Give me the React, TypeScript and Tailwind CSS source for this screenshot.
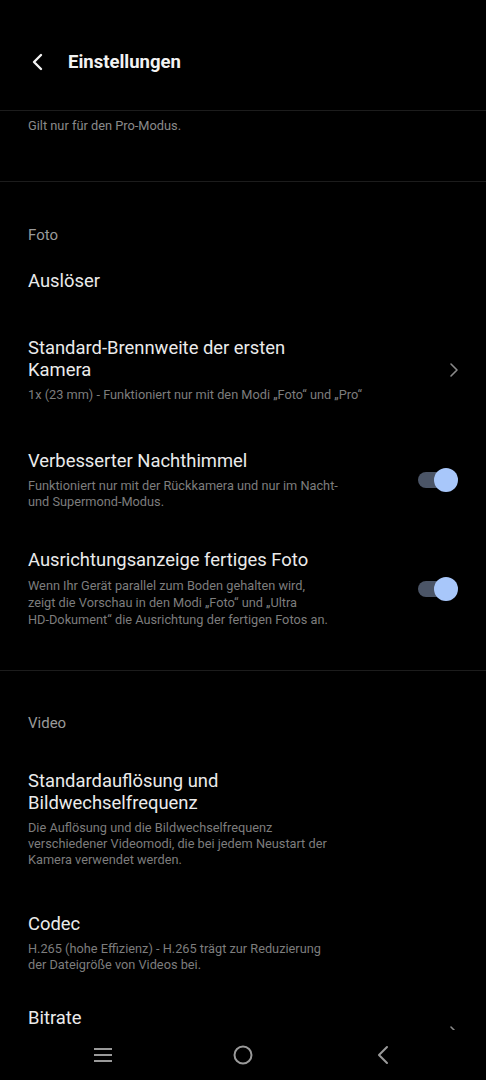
import React from 'react';

const font = { fontFamily: 'Roboto, "Noto Sans", sans-serif' };

function Toggle() {
  return (
    <div className="relative h-[24px] w-[40px] shrink-0">
      <div className="absolute left-0 top-[4px] h-[16px] w-[30px] rounded-full bg-[#4b5567]" />
      <div className="absolute right-0 top-0 h-[24px] w-[24px] rounded-full bg-[#a8c7fa]" />
    </div>
  );
}

function Chevron({ className = '' }: { className?: string }) {
  return (
    <svg width="10" height="16" viewBox="0 0 10 16" className={className}>
      <path d="M2 2l6 6-6 6" fill="none" stroke="#8a8a8a" strokeWidth="1.6" strokeLinecap="round" strokeLinejoin="round" />
    </svg>
  );
}

type Row = {
  title: string[];
  sub?: string[];
  mt: number;
  right?: 'toggle' | 'chevron';
  subLh?: string;
  chevronClass?: string;
};

function SettingRow({ row }: { row: Row }) {
  return (
    <div className="flex items-center pl-[28px] pr-[28px]" style={{ marginTop: row.mt }}>
      <div className="flex-1 min-w-0 pr-[60px]">
        <div className="text-[18.4px] leading-[22px] text-[#ebebeb]">
          {row.title.map((t) => (
            <div key={t} className="whitespace-nowrap">{t}</div>
          ))}
        </div>
        {row.sub && (
          <div className={`mt-[6px] text-[12.75px] ${row.subLh ?? 'leading-[16px]'} text-[#7d7d7d]`}>
            {row.sub.map((t) => (
              <div key={t} className="whitespace-nowrap">{t}</div>
            ))}
          </div>
        )}
      </div>
      {row.right === 'toggle' && <Toggle />}
      {row.right === 'chevron' && <Chevron className={row.chevronClass ?? 'mr-[-1px]'} />}
    </div>
  );
}

export default function App() {
  return (
    <div className="relative h-[1080px] w-[486px] overflow-hidden bg-black" style={font}>
      {/* header */}
      <div className="flex h-[110px] items-start pt-[51px]">
        <svg width="14" height="20" viewBox="0 0 14 20" className="ml-[31px] mt-[1px]">
          <path d="M10 3L3 10l7 7" fill="none" stroke="#f2f2f2" strokeWidth="2.4" strokeLinecap="round" strokeLinejoin="round" />
        </svg>
        <h1 className="ml-[23px] text-[18.5px] font-bold leading-[22px] text-[#f2f2f2]">Einstellungen</h1>
      </div>

      <div className="h-[71px] border-t border-[#1c1c1c] pl-[28px] pt-[6px] text-[12.8px] leading-[18px] text-[#8a8a8a]">
        Gilt nur für den Pro-Modus.
      </div>

      {/* Foto */}
      <div className="h-[489px] border-t border-[#1c1c1c]">
        <div className="mt-[43px] pl-[28px] text-[15px] leading-[20px] text-[#9a9a9a]">Foto</div>
        <div className="mt-[24px] pl-[28px] text-[18.4px] leading-[24px] text-[#ebebeb]">Auslöser</div>
        <SettingRow
          row={{
            title: ['Standard-Brennweite der ersten', 'Kamera'],
            sub: ['1x (23 mm) - Funktioniert nur mit den Modi „Foto“ und „Pro“'],
            mt: 44,
            right: 'chevron',
          }}
        />
        <SettingRow
          row={{
            title: ['Verbesserter Nachthimmel'],
            sub: ['Funktioniert nur mit der Rückkamera und nur im Nacht-', 'und Supermond-Modus.'],
            mt: 47,
            right: 'toggle',
          }}
        />
        <SettingRow
          row={{
            title: ['Ausrichtungsanzeige fertiges Foto'],
            sub: [
              'Wenn Ihr Gerät parallel zum Boden gehalten wird,',
              'zeigt die Vorschau in den Modi „Foto“ und „Ultra',
              'HD-Dokument“ die Ausrichtung der fertigen Fotos an.',
            ],
            subLh: 'leading-[17px]',
            mt: 39,
            right: 'toggle',
          }}
        />
      </div>

      {/* Video */}
      <div className="border-t border-[#1c1c1c]">
        <div className="mt-[42px] pl-[28px] text-[15px] leading-[20px] text-[#9a9a9a]">Video</div>
        <SettingRow
          row={{
            title: ['Standardauflösung und', 'Bildwechselfrequenz'],
            sub: [
              'Die Auflösung und die Bildwechselfrequenz',
              'verschiedener Videomodi, die bei jedem Neustart der',
              'Kamera verwendet werden.',
            ],
            mt: 37,
          }}
        />
        <SettingRow
          row={{
            title: ['Codec'],
            sub: ['H.265 (hohe Effizienz) - H.265 trägt zur Reduzierung', 'der Dateigröße von Videos bei.'],
            mt: 45,
          }}
        />
        <SettingRow
          row={{
            title: ['Bitrate'],
            sub: ['Hoch'],
            mt: 34,
            right: 'chevron',
            chevronClass: 'mr-[-1px] mt-[8px]',
          }}
        />
      </div>

      {/* system nav bar */}
      <div className="absolute bottom-0 left-0 right-0 flex h-[50px] items-center bg-black">
        <svg width="20" height="16" viewBox="0 0 20 16" className="ml-[93px]">
          <path d="M1 2h18M1 8h18M1 14h18" stroke="#9a9a9a" strokeWidth="2" />
        </svg>
        <svg width="22" height="22" viewBox="0 0 22 22" className="ml-[119px]">
          <circle cx="11" cy="11" r="8.5" fill="none" stroke="#9a9a9a" strokeWidth="2" />
        </svg>
        <svg width="14" height="20" viewBox="0 0 14 20" className="ml-[122px]">
          <path d="M11 2L3 10l8 8" fill="none" stroke="#9a9a9a" strokeWidth="2" strokeLinecap="round" strokeLinejoin="round" />
        </svg>
      </div>
    </div>
  );
}
